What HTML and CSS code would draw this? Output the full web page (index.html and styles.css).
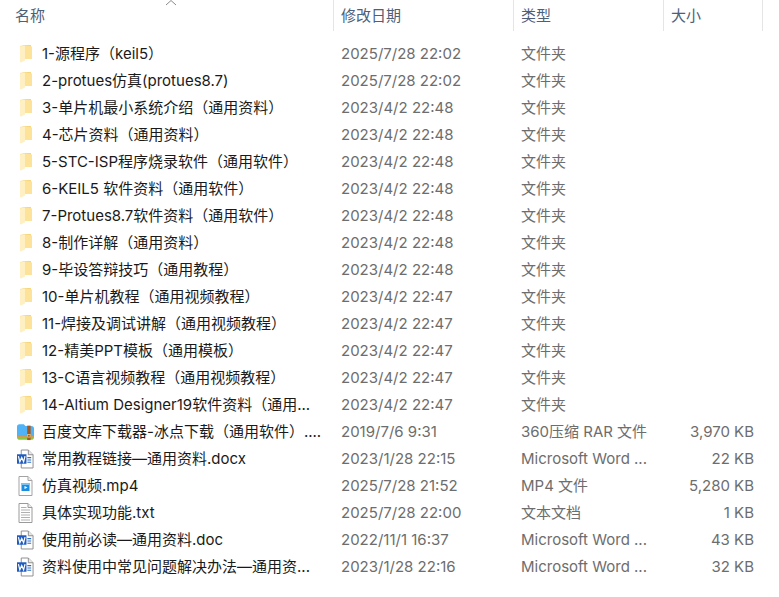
FILE: index.html
```html
<!DOCTYPE html>
<html lang="zh-CN">
<head>
<meta charset="utf-8">
<title>文件列表</title>
<link rel="stylesheet" href="styles.css">
</head>
<body>
<svg class="defs" width="0" height="0">
  <symbol id="folder" viewBox="0 0 17 20">
    <path d="M3 2 L8 1 H14 V15 H8 Z" fill="#f6d77f"/>
    <path d="M3 2.500 L8 1.500 V16.500 L4 18.500 L3 18 Z" fill="#fff0c4"/>
    <path d="M8 1.500 L15 2.500 V15 H8 Z" fill="#fde39a"/>
  </symbol>
  <symbol id="rar" viewBox="0 0 20 20">
    <path d="M0 4 Q0 1 3 1 H8 L10 3 H17 Q20 3 20 6 V16 H0 Z" fill="#4fb3f6"/>
    <path d="M0 16 H20 Q20 19 18 19 H2 Q0 19 0 16 Z" fill="#8dc63f"/>
    <path d="M0 15 H20 V16.500 H0 Z" fill="#f7941d"/>
    <rect x="12" y="2.500" width="4" height="17" fill="#a8561c"/>
    <rect x="12.500" y="13" width="3" height="3" fill="none" stroke="#e8c27a"/>
  </symbol>
  <symbol id="word" viewBox="0 0 18 20">
    <path d="M4.500 .5 H12 L17 5.500 V19.500 H4.500 Z" fill="#fff" stroke="#8a8a8a"/>
    <path d="M12 .5 V5.500 H17" fill="#e8e8e8" stroke="#8a8a8a"/>
    <path d="M11 8.500 H15 M11 11 H15 M11 13.500 H15" stroke="#2b6cc4" stroke-width="1.200"/>
    <rect x="0" y="5" width="10" height="10" fill="#1f5bc0"/>
    <path d="M1.500 7 L3 13 L5 8.500 L7 13 L8.500 7" fill="none" stroke="#fff" stroke-width="1.300"/>
  </symbol>
  <symbol id="mp4" viewBox="0 0 16 20">
    <path d="M1.500 .5 H10.500 L14.500 4.500 V19.500 H1.500 Z" fill="#fff" stroke="#a3a3a3"/>
    <path d="M10.500 .5 V4.500 H14.500" fill="#eee" stroke="#a3a3a3"/>
    <rect x="4" y="7" width="8" height="8" fill="#1c8ee0"/>
    <rect x="4" y="7" width="8" height="2" fill="#7cc4f2"/>
    <path d="M7 10 L10 11.500 L7 13 Z" fill="#fff"/>
  </symbol>
  <symbol id="txt" viewBox="0 0 16 20">
    <path d="M1.500 .5 H10.500 L14.500 4.500 V19.500 H1.500 Z" fill="#fff" stroke="#9a9a9a"/>
    <path d="M10.500 .5 V4.500 H14.500" fill="#eee" stroke="#9a9a9a"/>
    <path d="M3.500 4.500 H9 M3.500 7 H12.500 M3.500 9.500 H12.500 M3.500 12 H12.500 M3.500 14.500 H12.500 M3.500 17 H12.500" stroke="#b0b0b0" stroke-width="1"/>
  </symbol>
</svg>

<div class="explorer">
  <div class="row head">
    <div class="name-h">名称<svg class="sort" width="12" height="6" viewBox="0 0 12 6"><path d="M1 5 L6 .5 L11 5" fill="none" stroke="#8a8a8a"/></svg></div>
    <div class="col-h">修改日期</div>
    <div class="col-h">类型</div>
    <div class="col-h">大小</div>
  </div>
  <div class="list">
    <div class="row"><div class="name"><svg class="ic"><use href="#folder"/></svg>1-源程序（keil5）</div><div class="cell">2025/7/28 22:02</div><div class="cell">文件夹</div><div class="size"></div></div>
    <div class="row"><div class="name"><svg class="ic"><use href="#folder"/></svg>2-protues仿真(protues8.7)</div><div class="cell">2025/7/28 22:02</div><div class="cell">文件夹</div><div class="size"></div></div>
    <div class="row"><div class="name"><svg class="ic"><use href="#folder"/></svg>3-单片机最小系统介绍（通用资料）</div><div class="cell">2023/4/2 22:48</div><div class="cell">文件夹</div><div class="size"></div></div>
    <div class="row"><div class="name"><svg class="ic"><use href="#folder"/></svg>4-芯片资料（通用资料）</div><div class="cell">2023/4/2 22:48</div><div class="cell">文件夹</div><div class="size"></div></div>
    <div class="row"><div class="name"><svg class="ic"><use href="#folder"/></svg>5-STC-ISP程序烧录软件（通用软件）</div><div class="cell">2023/4/2 22:48</div><div class="cell">文件夹</div><div class="size"></div></div>
    <div class="row"><div class="name"><svg class="ic"><use href="#folder"/></svg>6-KEIL5 软件资料（通用软件）</div><div class="cell">2023/4/2 22:48</div><div class="cell">文件夹</div><div class="size"></div></div>
    <div class="row"><div class="name"><svg class="ic"><use href="#folder"/></svg>7-Protues8.7软件资料（通用软件）</div><div class="cell">2023/4/2 22:48</div><div class="cell">文件夹</div><div class="size"></div></div>
    <div class="row"><div class="name"><svg class="ic"><use href="#folder"/></svg>8-制作详解（通用资料）</div><div class="cell">2023/4/2 22:48</div><div class="cell">文件夹</div><div class="size"></div></div>
    <div class="row"><div class="name"><svg class="ic"><use href="#folder"/></svg>9-毕设答辩技巧（通用教程）</div><div class="cell">2023/4/2 22:48</div><div class="cell">文件夹</div><div class="size"></div></div>
    <div class="row"><div class="name"><svg class="ic"><use href="#folder"/></svg>10-单片机教程（通用视频教程）</div><div class="cell">2023/4/2 22:47</div><div class="cell">文件夹</div><div class="size"></div></div>
    <div class="row"><div class="name"><svg class="ic"><use href="#folder"/></svg>11-焊接及调试讲解（通用视频教程）</div><div class="cell">2023/4/2 22:47</div><div class="cell">文件夹</div><div class="size"></div></div>
    <div class="row"><div class="name"><svg class="ic"><use href="#folder"/></svg>12-精美PPT模板（通用模板）</div><div class="cell">2023/4/2 22:47</div><div class="cell">文件夹</div><div class="size"></div></div>
    <div class="row"><div class="name"><svg class="ic"><use href="#folder"/></svg>13-C语言视频教程（通用视频教程）</div><div class="cell">2023/4/2 22:47</div><div class="cell">文件夹</div><div class="size"></div></div>
    <div class="row"><div class="name"><svg class="ic"><use href="#folder"/></svg>14-Altium Designer19软件资料（通用...</div><div class="cell">2023/4/2 22:47</div><div class="cell">文件夹</div><div class="size"></div></div>
    <div class="row"><div class="name"><svg class="ic"><use href="#rar"/></svg>百度文库下载器-冰点下载（通用软件）....</div><div class="cell">2019/7/6 9:31</div><div class="cell">360压缩 RAR 文件</div><div class="size">3,970 KB</div></div>
    <div class="row"><div class="name"><svg class="ic"><use href="#word"/></svg>常用教程链接—通用资料.docx</div><div class="cell">2023/1/28 22:15</div><div class="cell">Microsoft Word ...</div><div class="size">22 KB</div></div>
    <div class="row"><div class="name"><svg class="ic"><use href="#mp4"/></svg>仿真视频.mp4</div><div class="cell">2025/7/28 21:52</div><div class="cell">MP4 文件</div><div class="size">5,280 KB</div></div>
    <div class="row"><div class="name"><svg class="ic"><use href="#txt"/></svg>具体实现功能.txt</div><div class="cell">2025/7/28 22:00</div><div class="cell">文本文档</div><div class="size">1 KB</div></div>
    <div class="row"><div class="name"><svg class="ic"><use href="#word"/></svg>使用前必读—通用资料.doc</div><div class="cell">2022/11/1 16:37</div><div class="cell">Microsoft Word ...</div><div class="size">43 KB</div></div>
    <div class="row"><div class="name"><svg class="ic"><use href="#word"/></svg>资料使用中常见问题解决办法—通用资...</div><div class="cell">2023/1/28 22:16</div><div class="cell">Microsoft Word ...</div><div class="size">32 KB</div></div>
  </div>
</div>
</body>
</html>
```
FILE: styles.css
```css
* { box-sizing: border-box; }
html, body { margin: 0; padding: 0; background: #fff; }
body {
  width: 779px;
  height: 597px;
  overflow: hidden;
  font-family: "Inter", "Noto Sans CJK SC", sans-serif;
  font-size: 15px;
}
.defs { display: block; height: 0; }
.explorer { width: 779px; }
.row {
  display: grid;
  grid-template-columns: 333px 180px 150px 100px;
  height: 27px;
  line-height: 27px;
  white-space: nowrap;
}
.head {
  height: 31px;
  line-height: 31px;
  color: #4c607a;
}
.name-h, .col-h {
  position: relative;
  height: 31px;
  padding-left: 8px;
}
.name-h { padding-left: 15px; }
.col-h, .head .col-h:last-child { border-left: 1px solid #e5e5e5; padding-left: 7px; }
.head .col-h:last-child { border-right: 1px solid #e5e5e5; }
.sort { position: absolute; left: 165px; top: 0; }
.list { padding-top: 9px; }
.name {
  display: flex;
  align-items: center;
  color: #1a1a1a;
  padding-left: 17px;
}
.ic { width: 17px; height: 20px; margin-right: 8px; flex: none; }
.cell { padding-left: 8px; color: #6d6d6d; }
.size { padding-right: 9px; text-align: right; color: #6d6d6d; }
```
